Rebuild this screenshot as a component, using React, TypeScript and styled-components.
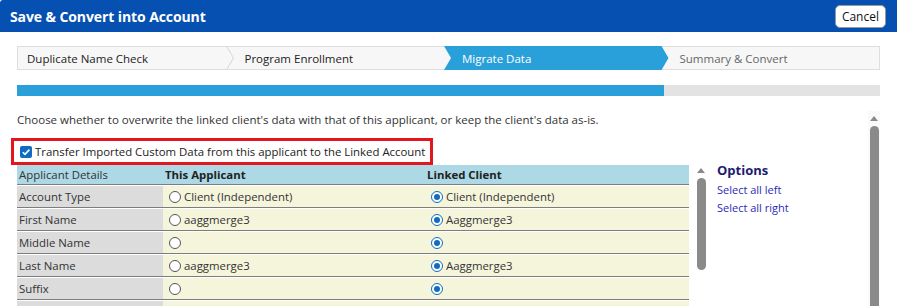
import * as React from 'react';
import styled, { createGlobalStyle, css } from 'styled-components';

const GlobalStyle = createGlobalStyle`
  html, body {
    margin: 0;
    padding: 0;
    background: #fff;
  }
  * {
    box-sizing: border-box;
  }
`;

const FONT = `'Open Sans', 'Noto Sans', 'Liberation Sans', sans-serif`;

const Dialog = styled.div`
  width: 897px;
  height: 306px;
  overflow: hidden;
  font-family: ${FONT};
  color: #333;
  background: #fff;
`;

const Header = styled.div`
  display: flex;
  align-items: center;
  justify-content: space-between;
  height: 32px;
  padding: 0 11px 0 10px;
  background: #0650b2;
  border-top-left-radius: 3px;
`;

const Title = styled.div`
  color: #fff;
  font-weight: 700;
  font-size: 14px;
  letter-spacing: -0.1px;
`;

const CancelButton = styled.button`
  height: 23px;
  padding: 0 6px;
  background: #fff;
  border: 1px solid #999;
  border-radius: 5px;
  font-family: ${FONT};
  font-size: 12px;
  color: #111;
`;

const Body = styled.div`
  padding: 14px 17px 0 17px;
`;

const Steps = styled.div`
  display: flex;
  height: 24px;
  background: #f7f7f7;
  border: 1px solid #dedede;
`;

const Step = styled.div<{ $active?: boolean; $first?: boolean }>`
  position: relative;
  flex: 1;
  display: flex;
  align-items: center;
  padding-left: ${({ $first }) => ($first ? '9px' : '18px')};
  font-size: 11.5px;
  color: #222;

  ${({ $active }) =>
    $active &&
    css`
      color: #fff;
      z-index: 1;
      &::before {
        content: '';
        position: absolute;
        top: -1px;
        bottom: -1px;
        left: 0;
        right: -7px;
        background: #29a0da;
        clip-path: polygon(0 0, calc(100% - 7px) 0, 100% 50%, calc(100% - 7px) 100%, 0 100%, 7px 50%);
      }
    `}
`;

const StepLabel = styled.span<{ $muted?: boolean }>`
  position: relative;
  color: ${({ $muted }) => ($muted ? '#666' : 'inherit')};
`;

const Chevron = styled.svg`
  position: absolute;
  right: -7px;
  top: -1px;
  width: 8px;
  height: 24px;
  z-index: 2;
`;

const Progress = styled.div`
  margin-top: 15px;
  height: 11px;
  background: #e3e3e3;
`;

const ProgressFill = styled.div`
  height: 100%;
  background: #29a0da;
`;

const ScrollArea = styled.div`
  display: flex;
  margin-top: 12px;
`;

const Content = styled.div`
  flex: 1;
`;

const Instruction = styled.div`
  margin-top: 4px;
  font-size: 11.5px;
  line-height: 16px;
  color: #333;
`;

const Highlight = styled.div`
  display: flex;
  align-items: center;
  gap: 3px;
  width: 422px;
  height: 27px;
  margin: 10px 0 0 -6px;
  padding-left: 6px;
  border: 3px solid #e3161b;
  font-size: 11.4px;
  white-space: nowrap;
  color: #222;
`;

const CheckBox = styled.span`
  display: inline-flex;
  flex: none;
  align-items: center;
  justify-content: center;
  width: 12px;
  height: 12px;
  border-radius: 2px;
  background: #0f6cc4;
`;

const TableRow = styled.div`
  display: flex;
  align-items: flex-start;
`;

const Table = styled.div`
  width: 672px;
`;

const Row = styled.div<{ $head?: boolean }>`
  display: grid;
  grid-template-columns: 146px 262px 264px;
  height: ${({ $head }) => ($head ? '20px' : '22px')};
  border-bottom: 1px solid #7d7d7d;
  margin-bottom: 1px;
  background: ${({ $head }) => ($head ? '#add8e6' : 'transparent')};
`;

const Cell = styled.div<{ $kind: 'label' | 'data' | 'head' | 'headBold' }>`
  display: flex;
  align-items: center;
  gap: 3px;
  font-size: 11.4px;
  color: #333;
  white-space: nowrap;
  ${({ $kind }) =>
    $kind === 'label' &&
    css`
      background: #dcdcdc;
      padding-left: 2px;
    `}
  ${({ $kind }) =>
    $kind === 'data' &&
    css`
      background: #f5f5dc;
      padding-left: 6px;
    `}
  ${({ $kind }) =>
    $kind === 'head' &&
    css`
      padding-left: 2px;
    `}
  ${({ $kind }) =>
    $kind === 'headBold' &&
    css`
      padding-left: 2px;
      font-weight: 700;
      color: #222;
    `}
`;

const Radio = styled.span<{ $checked?: boolean }>`
  position: relative;
  flex: none;
  width: 12px;
  height: 12px;
  border-radius: 50%;
  background: #fff;
  border: 1px solid ${({ $checked }) => ($checked ? '#0f6cc4' : '#555')};
  ${({ $checked }) =>
    $checked &&
    css`
      &::after {
        content: '';
        position: absolute;
        inset: 2px;
        border-radius: 50%;
        background: #0f6cc4;
      }
    `}
`;

const Track = styled.div<{ $height: number }>`
  display: flex;
  flex-direction: column;
  align-items: center;
  width: 12px;
  height: ${({ $height }) => $height}px;
  background: #fafafa;
`;

const OuterTrack = styled(Track)`
  margin-top: 3px;
  padding-top: 2px;
`;

const Arrow = styled.div`
  margin-top: 3px;
  width: 0;
  height: 0;
  border-left: 4px solid transparent;
  border-right: 4px solid transparent;
  border-bottom: 5px solid #8a8a8a;
`;

const Thumb = styled.div<{ $height: number }>`
  margin-top: 5px;
  width: 9px;
  height: ${({ $height }) => $height}px;
  border-radius: 5px 5px ${({ $height }) => ($height > 150 ? '0 0' : '5px 5px')};
  background: #8a8a8a;
`;

const InnerTrack = styled(Track)`
  margin: 0 10px 0 6px;
  background: transparent;
`;

const Options = styled.div`
  display: flex;
  flex-direction: column;
  gap: 2px;
  margin-top: -4px;
`;

const OptionsTitle = styled.div`
  font-size: 13px;
  font-weight: 700;
  color: #1c1c70;
  line-height: 18px;
  margin-bottom: 1px;
`;

const OptionLink = styled.a`
  font-size: 11px;
  line-height: 16px;
  color: #2a2ab8;
  text-decoration: none;
`;

const steps = ['Duplicate Name Check', 'Program Enrollment', 'Migrate Data', 'Summary & Convert'];
const activeStep = 2;

type DataRow = {
  label: string;
  left: string;
  right: string;
};

const rows: DataRow[] = [
  { label: 'Account Type', left: 'Client (Independent)', right: 'Client (Independent)' },
  { label: 'First Name', left: 'aaggmerge3', right: 'Aaggmerge3' },
  { label: 'Middle Name', left: '', right: '' },
  { label: 'Last Name', left: 'aaggmerge3', right: 'Aaggmerge3' },
  { label: 'Suffix', left: '', right: '' },
  { label: '', left: '', right: '' },
];

export default function App() {
  return (
    <Dialog>
      <GlobalStyle />
      <Header>
        <Title>Save &amp; Convert into Account</Title>
        <CancelButton>Cancel</CancelButton>
      </Header>
      <Body>
        <Steps>
          {steps.map((s, i) => (
            <Step key={s} $active={i === activeStep} $first={i === 0}>
              <StepLabel $muted={i > activeStep}>{s}</StepLabel>
              {i < steps.length - 1 && i !== activeStep && i !== activeStep - 1 && (
                <Chevron viewBox="0 0 8 24">
                  <polyline points="0.5,0 7.5,12 0.5,24" fill="none" stroke="#d6d6d6" strokeWidth="1" />
                </Chevron>
              )}
            </Step>
          ))}
        </Steps>
        <Progress>
          <ProgressFill style={{ width: `${((activeStep + 1) / steps.length) * 100}%` }} />
        </Progress>
        <ScrollArea>
          <Content>
            <Instruction>
              Choose whether to overwrite the linked client's data with that of this applicant, or keep the client's data as-is.
            </Instruction>
            <Highlight>
              <CheckBox>
                <svg width="10" height="10" viewBox="0 0 10 10">
                  <polyline points="1.8,5.2 4,7.4 8.4,2.6" fill="none" stroke="#fff" strokeWidth="1.6" />
                </svg>
              </CheckBox>
              Transfer Imported Custom Data from this applicant to the Linked Account
            </Highlight>
            <TableRow>
              <Table>
                <Row $head>
                  <Cell $kind="head">Applicant Details</Cell>
                  <Cell $kind="headBold">This Applicant</Cell>
                  <Cell $kind="headBold">Linked Client</Cell>
                </Row>
                {rows.map((r, i) => (
                  <Row key={i}>
                    <Cell $kind="label">{r.label}</Cell>
                    <Cell $kind="data">
                      <Radio />
                      {r.left}
                    </Cell>
                    <Cell $kind="data">
                      <Radio $checked />
                      {r.right}
                    </Cell>
                  </Row>
                ))}
              </Table>
              <InnerTrack $height={110}>
                <Arrow />
                <Thumb $height={92} />
              </InnerTrack>
              <Options>
                <OptionsTitle>Options</OptionsTitle>
                <OptionLink href="#">Select all left</OptionLink>
                <OptionLink href="#">Select all right</OptionLink>
              </Options>
            </TableRow>
          </Content>
          <OuterTrack $height={200}>
            <Arrow />
            <Thumb $height={190} />
          </OuterTrack>
        </ScrollArea>
      </Body>
    </Dialog>
  );
}
